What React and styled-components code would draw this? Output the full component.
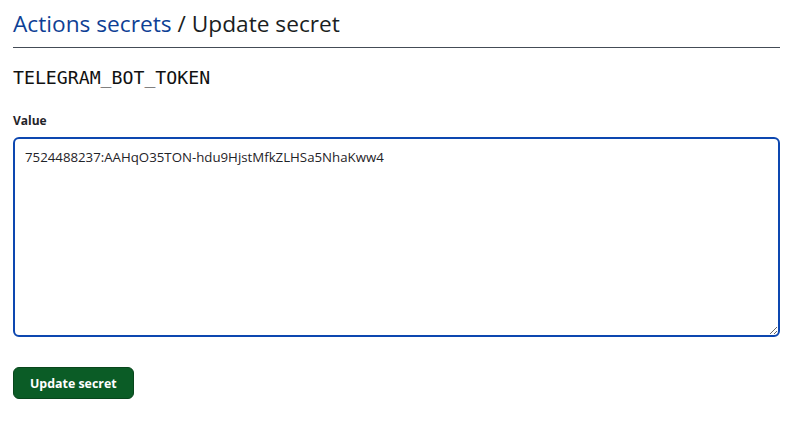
import React from 'react';
import styled, { createGlobalStyle } from 'styled-components';

const GlobalStyle = createGlobalStyle`
  body {
    margin: 0;
    background: #fff;
    font-family: "Open Sans", "Noto Sans", sans-serif;
    color: #1f2328;
  }
`;

const Page = styled.div`
  padding: 0 18px 0 13px;
`;

const Header = styled.h2`
  margin: 0;
  padding-top: 8px;
  height: 39px;
  font-size: 22.7px;
  font-weight: 400;
  line-height: 32px;
  color: #1a1e22;
  border-bottom: 1px solid #444c56;
  > a {
    color: #0e3f95;
    text-decoration: none;
  }
`;

const SecretName = styled.div`
  margin-top: 19px;
  font-family: "DejaVu Sans Mono", monospace;
  font-size: 18.2px;
  line-height: 22px;
  color: #111;
`;

const Label = styled.label`
  display: block;
  margin-top: 24px;
  font-size: 12px;
  font-weight: 700;
  line-height: 16px;
`;

const TextArea = styled.textarea`
  display: block;
  box-sizing: border-box;
  margin-top: 8px;
  width: 100%;
  height: 200px;
  padding: 8px 10px;
  border: 2px solid #0d47b0;
  border-radius: 6px;
  outline: none;
  font-family: "Open Sans", "Noto Sans", sans-serif;
  font-size: 13.25px;
  line-height: 20px;
  color: #1f2328;
`;

const Button = styled.button`
  margin-top: 30px;
  height: 32px;
  padding: 0 16px;
  background: #0b5c26;
  color: #fff;
  border: 1px solid #08461c;
  border-radius: 6px;
  font-family: "Open Sans", "Noto Sans", sans-serif;
  font-size: 12.4px;
  font-weight: 700;
`;

const App = () => {
  return (
    <Page>
      <GlobalStyle />
      <Header>
        <a href="#">Actions secrets</a> / Update secret
      </Header>
      <SecretName>TELEGRAM_BOT_TOKEN</SecretName>
      <Label htmlFor="secret-value">Value</Label>
      <TextArea
        id="secret-value"
        defaultValue="7524488237:AAHqO35TON-hdu9HjstMfkZLHSa5NhaKww4"
      />
      <Button>Update secret</Button>
    </Page>
  );
};

export default App;
